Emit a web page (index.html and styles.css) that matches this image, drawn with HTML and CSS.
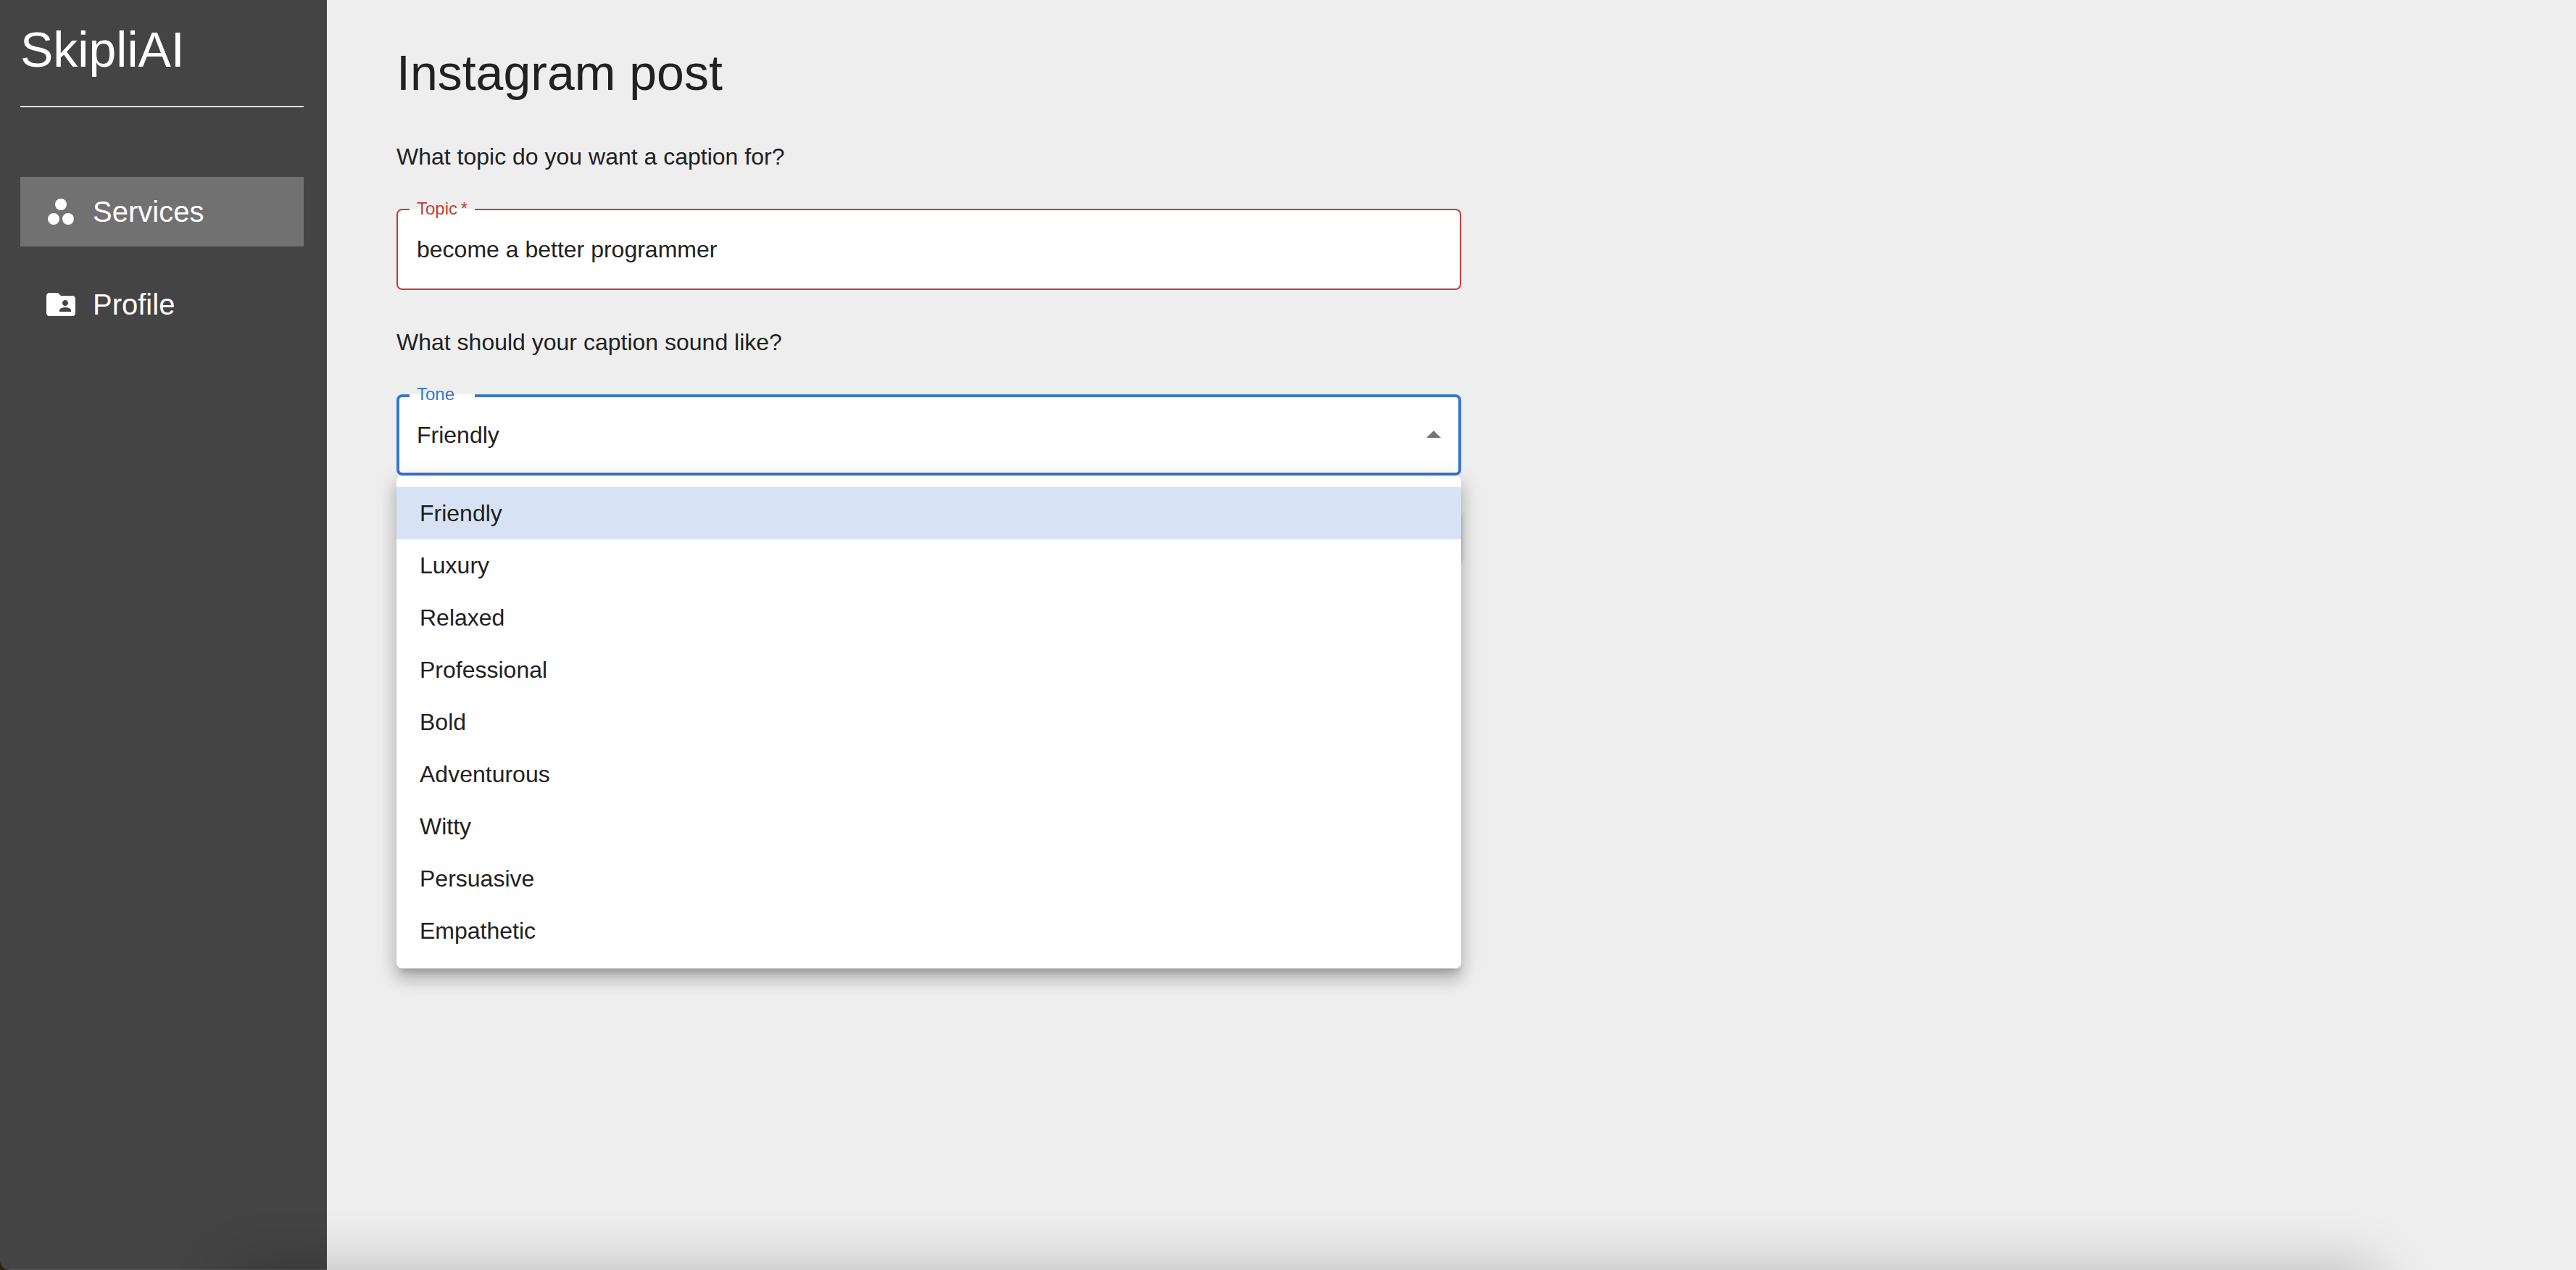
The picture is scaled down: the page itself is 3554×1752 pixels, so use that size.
FILE: index.html
```html
<!DOCTYPE html>
<html lang="en">
<head>
  <meta charset="utf-8">
  <title>SkipliAI</title>
  <link rel="stylesheet" href="styles.css">
</head>
<body>
  <div class="layout">
    <aside class="sidebar">
      <div class="brand">SkipliAI</div>
      <hr class="divider">
      <nav class="nav">
        <a class="nav-item active" href="#services">
          <svg class="nav-icon" viewBox="0 0 24 24" aria-hidden="true"><circle cx="12" cy="7" r="4"/><circle cx="7" cy="17" r="4"/><circle cx="17" cy="17" r="4"/></svg>
          Services
        </a>
        <a class="nav-item" href="#profile">
          <svg class="nav-icon" viewBox="0 0 24 24" aria-hidden="true"><path d="M20 6h-8l-2-2H4c-1.100 0-1.990.9-1.990 2L2 18c0 1.100.9 2 2 2h16c1.100 0 2-.9 2-2V8c0-1.100-.9-2-2-2zm-5 3c1.100 0 2 .9 2 2s-.9 2-2 2-2-.9-2-2 .9-2 2-2zm4 8h-8v-1c0-1.330 2.670-2 4-2s4 .670 4 2v1z"/></svg>
          Profile
        </a>
      </nav>
    </aside>
    <main class="main">
      <h1 class="title">Instagram post</h1>
      <form class="form">
        <p class="question">What topic do you want a caption for?</p>
        <div class="field error">
          <input class="control" id="topic" type="text" value="become a better programmer" required>
          <label class="label" for="topic">Topic&thinsp;*</label>
        </div>
        <p class="question">What should your caption sound like?</p>
        <div class="field focused">
          <select class="control" id="tone">
            <option selected>Friendly</option>
            <option>Luxury</option>
            <option>Relaxed</option>
            <option>Professional</option>
            <option>Bold</option>
            <option>Adventurous</option>
            <option>Witty</option>
            <option>Persuasive</option>
            <option>Empathetic</option>
          </select>
          <label class="label" for="tone">Tone</label>
          <svg class="arrow" viewBox="0 0 24 24" aria-hidden="true"><path d="M7 14l5-5 5 5z"/></svg>
          <ul class="menu" role="listbox" aria-label="Tone">
            <li class="option selected" role="option" aria-selected="true">Friendly</li>
            <li class="option" role="option">Luxury</li>
            <li class="option" role="option">Relaxed</li>
            <li class="option" role="option">Professional</li>
            <li class="option" role="option">Bold</li>
            <li class="option" role="option">Adventurous</li>
            <li class="option" role="option">Witty</li>
            <li class="option" role="option">Persuasive</li>
            <li class="option" role="option">Empathetic</li>
          </ul>
        </div>
        <button class="submit" type="submit" aria-label="Submit"></button>
      </form>
    </main>
  </div>
</body>
</html>
```
FILE: styles.css
```css
* {
  box-sizing: border-box;
}

body {
  margin: 0;
  background: #2b2510;
  color: #212121;
  font-family: Helvetica, "Liberation Sans", Arial, sans-serif;
  font-size: 32px;
  line-height: 48px;
}

/* soft shade along the bottom edge of the window */
body::after {
  content: "";
  position: fixed;
  top: 100%;
  left: 320px;
  right: 276px;
  height: 200px;
  box-shadow: 0 0 80px rgba(0, 0, 0, 0.24);
  pointer-events: none;
}

.layout {
  display: flex;
  min-height: 100vh;
}

.sidebar {
  flex: none;
  width: 451px;
  padding: 26px 32px 26px 28px;
  background: #444;
  border-bottom: 1px solid #575757;
  border-bottom-left-radius: 14px;
  color: #fff;
}

.brand,
.title {
  margin: 0;
  font-size: 68px;
  font-weight: 400;
  line-height: 84px;
}

.divider {
  height: 2px;
  margin: 36px 0 96px;
  border: 0;
  background: #e0e0e0;
}

.nav {
  display: flex;
  flex-direction: column;
  gap: 32px;
}

.nav-item {
  display: flex;
  align-items: center;
  gap: 20px;
  height: 96px;
  padding: 0 32px;
  color: inherit;
  font-size: 40px;
  text-decoration: none;
}

.nav-item.active {
  background: #717171;
}

.nav-icon {
  width: 48px;
  height: 48px;
  fill: currentColor;
}

.main {
  flex: 1;
  padding: 58px 70px 58px 96px;
  background: #eee;
}

.form {
  display: flex;
  flex-direction: column;
  gap: 48px;
  width: 50%;
  margin-top: 50px;
}

.question {
  margin: 0;
}

.field {
  position: relative;
}

.control {
  appearance: none;
  display: block;
  width: 100%;
  height: 112px;
  margin: 0;
  padding: 0 26px;
  border: 2px solid #c43e37;
  border-radius: 8px;
  outline: 0;
  background: #fff;
  color: inherit;
  font: inherit;
}

.focused .control {
  padding: 0 24px;
  border: 4px solid #3876cb;
}

/* the label sits in a gap of the top border */
.label {
  position: absolute;
  top: -12px;
  left: 18px;
  width: 90px;
  padding-left: 10px;
  background: linear-gradient(transparent 12px, #fff 12px);
  color: #c43e37;
  font-size: 24px;
  line-height: 24px;
}

.focused .label {
  color: #3876cb;
}

.arrow {
  position: absolute;
  top: 32px;
  right: 14px;
  width: 48px;
  height: 48px;
  fill: #757575;
  pointer-events: none;
}

.menu {
  position: absolute;
  top: 100%;
  left: 0;
  right: 0;
  z-index: 1;
  margin: 0;
  padding: 16px 0;
  border-radius: 8px;
  background: #fff;
  box-shadow:
    0 10px 10px -6px rgba(0, 0, 0, 0.2),
    0 16px 20px 2px rgba(0, 0, 0, 0.14),
    0 6px 28px 4px rgba(0, 0, 0, 0.12);
  list-style: none;
}

.option {
  padding: 12px 32px;
}

.option.selected {
  background: #d7e3f4;
}

.submit {
  align-self: flex-end;
  width: 240px;
  height: 72px;
  border: 0;
  border-radius: 8px;
  background: #3876cb;
  box-shadow:
    0 6px 2px -4px rgba(0, 0, 0, 0.2),
    0 4px 4px 0 rgba(0, 0, 0, 0.14),
    0 2px 10px 0 rgba(0, 0, 0, 0.12);
}
```
